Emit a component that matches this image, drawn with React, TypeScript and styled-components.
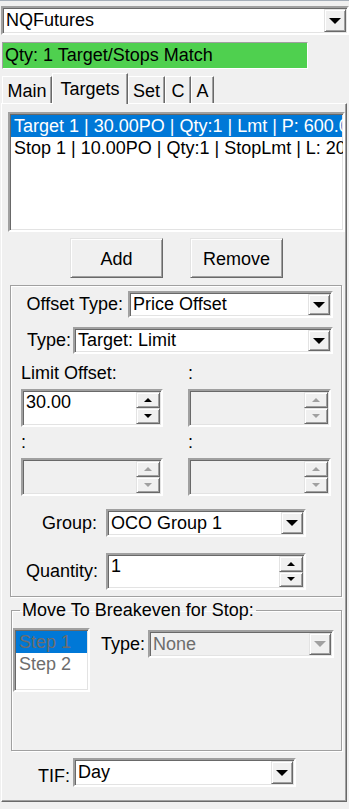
import styled, { createGlobalStyle } from 'styled-components'

const GlobalStyle = createGlobalStyle`
  html, body {
    margin: 0;
    padding: 0;
    background: #f0f0f0;
  }
  body {
    font-family: "Liberation Sans", Arial, sans-serif;
    font-size: 18px;
    color: #000;
  }
  * {
    box-sizing: border-box;
  }
`

const Window = styled.div`
  width: 349px;
  height: 809px;
  border-top: 1px solid #a6afb9;
  overflow: hidden;
`

const Field = styled.div<{ $w: number; $h: number; $disabled?: boolean }>`
  display: flex;
  align-items: stretch;
  width: ${(p) => p.$w}px;
  height: ${(p) => p.$h}px;
  flex: none;
  background: ${(p) => (p.$disabled ? '#f0f0f0' : '#fff')};
  border: 2px solid;
  border-color: #a0a0a0 #fff #fff #a0a0a0;
  box-shadow: inset 1px 1px 0 #696969, inset -1px -1px 0 #e3e3e3;
  color: ${(p) => (p.$disabled ? '#6d6d6d' : '#000')};
`

const FieldText = styled.div<{ $top?: boolean }>`
  flex: 1;
  display: flex;
  align-items: ${(p) => (p.$top ? 'flex-start' : 'center')};
  padding-left: 3px;
  padding-top: ${(p) => (p.$top ? 1 : 0)}px;
  white-space: nowrap;
  overflow: hidden;
`

const RaisedButton = styled.div`
  display: flex;
  align-items: center;
  justify-content: center;
  background: #f0f0f0;
  border: 1px solid;
  border-color: #e3e3e3 #696969 #696969 #e3e3e3;
  box-shadow: inset 1px 1px 0 #fff, inset -1px -1px 0 #a0a0a0;
`

const DropButton = styled(RaisedButton)`
  width: 22px;
  margin: 1px 1px 1px 0;
`

const SpinButtons = styled.div`
  display: flex;
  flex-direction: column;
  width: 24px;
  margin: 1px 1px 1px 0;
`

const SpinHalf = styled(RaisedButton)`
  flex: 1;
`

const Arrow = styled.span<{ $up?: boolean; $small?: boolean; $disabled?: boolean }>`
  width: 0;
  height: 0;
  border-left: ${(p) => (p.$small ? 4 : 6)}px solid transparent;
  border-right: ${(p) => (p.$small ? 4 : 6)}px solid transparent;
  ${(p) => (p.$up ? 'border-bottom' : 'border-top')}: ${(p) => (p.$small ? 4 : 6)}px solid
    ${(p) => (p.$disabled ? '#a0a0a0' : '#000')};
`

function Combo({ value, w, h, disabled }: { value: string; w: number; h: number; disabled?: boolean }) {
  return (
    <Field $w={w} $h={h} $disabled={disabled}>
      <FieldText>{value}</FieldText>
      <DropButton>
        <Arrow $disabled={disabled} />
      </DropButton>
    </Field>
  )
}

function Spin({ value, w, h, disabled }: { value?: string; w: number; h: number; disabled?: boolean }) {
  return (
    <Field $w={w} $h={h} $disabled={disabled}>
      <FieldText $top>{value}</FieldText>
      <SpinButtons>
        <SpinHalf>
          <Arrow $up $small $disabled={disabled} />
        </SpinHalf>
        <SpinHalf>
          <Arrow $small $disabled={disabled} />
        </SpinHalf>
      </SpinButtons>
    </Field>
  )
}

const TopCombo = styled.div`
  margin: 5px 0 0 1px;
`

const StatusBar = styled.div`
  margin: 7px 0 0 2px;
  width: 306px;
  height: 27px;
  padding-left: 2px;
  display: flex;
  align-items: center;
  background: #4fd04f;
  border-top: 1px solid #a0a0a0;
  border-left: 1px solid #a0a0a0;
  border-right: 1px solid #fff;
  border-bottom: 1px solid #fff;
  white-space: nowrap;
`

const TabStrip = styled.div`
  display: flex;
  align-items: flex-end;
  height: 30px;
  margin-top: 4px;
  padding-left: 2px;
  position: relative;
  z-index: 1;
`

const Tab = styled.div<{ $w: number; $active?: boolean }>`
  width: ${(p) => p.$w}px;
  height: ${(p) => (p.$active ? 31 : 27)}px;
  margin-bottom: ${(p) => (p.$active ? -1 : 0)}px;
  display: flex;
  align-items: center;
  justify-content: center;
  padding-top: ${(p) => (p.$active ? 0 : 2)}px;
  background: #f0f0f0;
  border: 1px solid;
  border-bottom: none;
  border-color: #fff #696969 transparent #fff;
  box-shadow: inset -1px 0 0 #a0a0a0;
`

const Panel = styled.div`
  margin-left: 1px;
  width: 346px;
  height: 699px;
  border: 1px solid;
  border-color: #fff #696969 #696969 #fff;
  box-shadow: inset -1px -1px 0 #a0a0a0;
`

const ListBox = styled.div<{ $w: number; $h: number }>`
  width: ${(p) => p.$w}px;
  height: ${(p) => p.$h}px;
  flex: none;
  background: #fff;
  border: 2px solid;
  border-color: #a0a0a0 #fff #fff #a0a0a0;
  box-shadow: inset 1px 1px 0 #696969, inset -1px -1px 0 #e3e3e3;
  padding: 1px 1px 0 1px;
  overflow: hidden;
`

const TargetList = styled(ListBox)`
  margin: 8px 0 0 6px;
`

const ListRow = styled.div<{ $selected?: boolean; $muted?: boolean }>`
  height: 22px;
  line-height: 22px;
  padding-left: 3px;
  white-space: nowrap;
  background: ${(p) => (p.$selected ? '#0078d7' : 'transparent')};
  color: ${(p) => (p.$muted ? '#6d6d6d' : p.$selected ? '#fff' : '#000')};
`

const ButtonRow = styled.div`
  display: flex;
  gap: 27px;
  margin: 6px 0 0 68px;
`

const PushButton = styled(RaisedButton)`
  width: 93px;
  height: 40px;
  padding-top: 2px;
`

const GroupBox = styled.div`
  margin: 7px 0 0 8px;
  width: 332px;
  height: 312px;
  border: 1px solid #a0a0a0;
  box-shadow: inset 1px 1px 0 #fff, 1px 1px 0 #fff;
`

const FormRow = styled.div<{ $top: number }>`
  display: flex;
  align-items: center;
  margin-top: ${(p) => p.$top}px;
`

const Label = styled.div<{ $w: number; $pad: number; $drop?: number }>`
  width: ${(p) => p.$w}px;
  padding-right: ${(p) => p.$pad}px;
  padding-top: ${(p) => p.$drop ?? 0}px;
  flex: none;
  text-align: right;
  white-space: nowrap;
`

const SpinGrid = styled.div`
  display: grid;
  grid-template-columns: 142px 143px;
  column-gap: 25px;
  row-gap: 5px;
  margin: 9px 0 0 10px;
`

const SpinCell = styled.div`
  display: flex;
  flex-direction: column;
`

const Caption = styled.div`
  height: 26px;
  line-height: 20px;
  white-space: nowrap;
`

const Fieldset = styled.fieldset`
  margin: 3px 0 0 9px;
  width: 331px;
  height: 151px;
  padding: 0;
  border: 1px solid #a0a0a0;
  box-shadow: inset 1px 1px 0 #fff, 1px 1px 0 #fff;
`

const Legend = styled.legend`
  margin-left: 8px;
  padding: 0 2px;
  line-height: 20px;
`

const BreakevenRow = styled.div`
  display: flex;
  align-items: flex-start;
  margin: 8px 0 0 1px;
`

const BreakevenType = styled.div`
  display: flex;
  align-items: center;
  margin-top: 2px;
`

export default function App() {
  return (
    <>
      <GlobalStyle />
      <Window>
        <TopCombo>
          <Combo value="NQFutures" w={348} h={29} />
        </TopCombo>
        <StatusBar>Qty: 1 Target/Stops Match</StatusBar>
        <TabStrip>
          <Tab $w={50}>Main</Tab>
          <Tab $w={76} $active>
            Targets
          </Tab>
          <Tab $w={37}>Set</Tab>
          <Tab $w={26}>C</Tab>
          <Tab $w={23}>A</Tab>
        </TabStrip>
        <Panel>
          <TargetList $w={337} $h={120}>
            <ListRow $selected>Target 1 | 30.00PO | Qty:1 | Lmt | P: 600.00</ListRow>
            <ListRow>Stop 1 | 10.00PO | Qty:1 | StopLmt | L: 20.00</ListRow>
          </TargetList>
          <ButtonRow>
            <PushButton>Add</PushButton>
            <PushButton>Remove</PushButton>
          </ButtonRow>
          <GroupBox>
            <FormRow $top={5}>
              <Label $w={117} $pad={5}>
                Offset Type:
              </Label>
              <Combo value="Price Offset" w={205} h={27} />
            </FormRow>
            <FormRow $top={9}>
              <Label $w={62} $pad={2}>
                Type:
              </Label>
              <Combo value="Target: Limit" w={260} h={27} />
            </FormRow>
            <SpinGrid>
              <SpinCell>
                <Caption>Limit Offset:</Caption>
                <Spin value="30.00" w={142} h={38} />
              </SpinCell>
              <SpinCell>
                <Caption>:</Caption>
                <Spin w={143} h={38} disabled />
              </SpinCell>
              <SpinCell>
                <Caption>:</Caption>
                <Spin w={142} h={38} disabled />
              </SpinCell>
              <SpinCell>
                <Caption>:</Caption>
                <Spin w={143} h={38} disabled />
              </SpinCell>
            </SpinGrid>
            <FormRow $top={13}>
              <Label $w={95} $pad={9}>
                Group:
              </Label>
              <Combo value="OCO Group 1" w={200} h={28} />
            </FormRow>
            <FormRow $top={16}>
              <Label $w={95} $pad={8}>
                Quantity:
              </Label>
              <Spin value="1" w={200} h={37} />
            </FormRow>
          </GroupBox>
          <Fieldset>
            <Legend>Move To Breakeven for Stop:</Legend>
            <BreakevenRow>
              <ListBox $w={77} $h={64}>
                <ListRow $selected $muted>
                  Step 1
                </ListRow>
                <ListRow $muted>Step 2</ListRow>
              </ListBox>
              <BreakevenType>
                <Label $w={58} $pad={3}>
                  Type:
                </Label>
                <Combo value="None" w={186} h={28} disabled />
              </BreakevenType>
            </BreakevenRow>
          </Fieldset>
          <FormRow $top={7}>
            <Label $w={71} $pad={3} $drop={7}>
              TIF:
            </Label>
            <Combo value="Day" w={223} h={29} />
          </FormRow>
        </Panel>
      </Window>
    </>
  )
}
